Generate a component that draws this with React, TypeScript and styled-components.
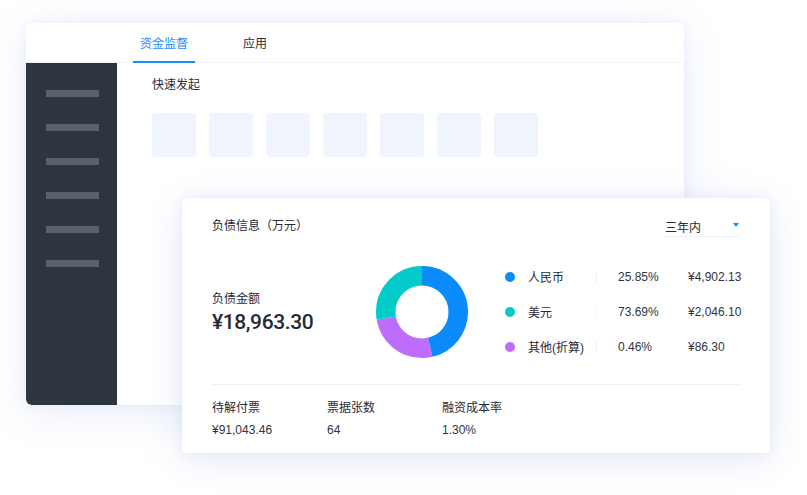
import React from 'react'
import styled, { createGlobalStyle } from 'styled-components'

const GlobalStyle = createGlobalStyle`
  html, body {
    margin: 0;
    padding: 0;
    background: #ffffff;
  }
  body {
    font-family: 'Helvetica Neue', 'Liberation Sans', 'Noto Sans CJK SC', sans-serif;
    color: #262a36;
    -webkit-font-smoothing: antialiased;
  }
`

const sideItems = [0, 1, 2, 3, 4, 5]
const quickItems = [0, 1, 2, 3, 4, 5, 6]

const legend = [
  { color: '#0b8bfa', name: '人民币', pct: '25.85%', amount: '¥4,902.13' },
  { color: '#03cbc9', name: '美元', pct: '73.69%', amount: '¥2,046.10' },
  { color: '#bd6cfb', name: '其他(折算)', pct: '0.46%', amount: '¥86.30' },
]

const stats = [
  { label: '待解付票', value: '¥91,043.46' },
  { label: '票据张数', value: '64' },
  { label: '融资成本率', value: '1.30%' },
]

// segments of the donut, in fractions of the full circle, clockwise from 12 o'clock
const segments = [
  { color: '#0b8bfa', from: 0, to: 0.463 },
  { color: '#bd6cfb', from: 0.463, to: 0.722 },
  { color: '#03cbc9', from: 0.722, to: 1 },
]

const Donut: React.FC = () => {
  const r = 36.25
  const c = 2 * Math.PI * r
  return (
    <DonutSvg width={92} height={92} viewBox="0 0 92 92">
      <g transform="rotate(-90 46 46)">
        {segments.map((s) => (
          <circle
            key={s.color}
            cx={46}
            cy={46}
            r={r}
            fill="none"
            stroke={s.color}
            strokeWidth={19.5}
            strokeDasharray={`${(s.to - s.from) * c} ${c}`}
            strokeDashoffset={-s.from * c}
          />
        ))}
      </g>
    </DonutSvg>
  )
}

export default function App() {
  return (
    <>
      <GlobalStyle />
      <Page>
        <BackCard>
          <Header>
            <HeaderSpacer />
            <Tabs>
              <Tab active>资金监督</Tab>
              <Tab>应用</Tab>
            </Tabs>
          </Header>
          <Body>
            <Sidebar>
              {sideItems.map((i) => (
                <SideBar key={i} />
              ))}
            </Sidebar>
            <Content>
              <SectionTitle>快速发起</SectionTitle>
              <QuickRow>
                {quickItems.map((i) => (
                  <QuickTile key={i} />
                ))}
              </QuickRow>
            </Content>
          </Body>
        </BackCard>

        <FrontCard>
          <CardHead>
            <CardTitle>负债信息（万元）</CardTitle>
            <Select>
              <span>三年内</span>
              <Caret />
            </Select>
          </CardHead>
          <Overview>
            <Total>
              <TotalLabel>负债金额</TotalLabel>
              <TotalValue>¥18,963.30</TotalValue>
            </Total>
            <Donut />
            <Legend>
              {legend.map((l) => (
                <LegendRow key={l.name}>
                  <Dot color={l.color} />
                  <LegendName>{l.name}</LegendName>
                  <LegendSep />
                  <LegendPct>{l.pct}</LegendPct>
                  <LegendAmount>{l.amount}</LegendAmount>
                </LegendRow>
              ))}
            </Legend>
          </Overview>
          <Stats>
            {stats.map((s) => (
              <Stat key={s.label}>
                <StatLabel>{s.label}</StatLabel>
                <StatValue>{s.value}</StatValue>
              </Stat>
            ))}
          </Stats>
        </FrontCard>
      </Page>
    </>
  )
}

const Page = styled.div`
  position: relative;
  width: 807px;
  height: 495px;
  padding: 23px 0 0 26px;
  box-sizing: border-box;
  overflow: hidden;
`

const BackCard = styled.div`
  width: 658px;
  height: 382px;
  background: #ffffff;
  border-radius: 6px;
  overflow: hidden;
  display: flex;
  flex-direction: column;
  box-shadow: 0 8px 40px rgba(190, 202, 240, 0.35), 0 0 12px rgba(210, 218, 245, 0.3);
`

const Header = styled.div`
  height: 40px;
  display: flex;
  flex-shrink: 0;
  border-bottom: 1px solid #f0f3fb;
  box-sizing: border-box;
`

const HeaderSpacer = styled.div`
  width: 91px;
`

const Tabs = styled.div`
  display: flex;
  gap: 41px;
  padding-left: 16px;
`

const Tab = styled.div<{ active?: boolean }>`
  height: 40px;
  padding: 0 7px;
  display: flex;
  align-items: center;
  box-sizing: border-box;
  font-size: 12px;
  color: ${(p) => (p.active ? '#1a8cff' : '#262a36')};
  border-bottom: 2px solid ${(p) => (p.active ? '#1a8cff' : 'transparent')};
  margin-bottom: -1px;
`

const Body = styled.div`
  flex: 1;
  display: flex;
`

const Sidebar = styled.div`
  width: 91px;
  background: #2c3540;
  padding-top: 27px;
  display: flex;
  flex-direction: column;
  gap: 27px;
  box-sizing: border-box;
`

const SideBar = styled.div`
  width: 53px;
  height: 7px;
  margin-left: 20px;
  background: #59626a;
`

const Content = styled.div`
  flex: 1;
  padding: 14px 0 0 35px;
`

const SectionTitle = styled.div`
  font-size: 12px;
  line-height: 16px;
  color: #262a36;
`

const QuickRow = styled.div`
  display: flex;
  gap: 13px;
  margin-top: 20px;
`

const QuickTile = styled.div`
  width: 44px;
  height: 44px;
  border-radius: 4px;
  background: #f0f5fd;
`

const FrontCard = styled.div`
  position: absolute;
  left: 182px;
  top: 198px;
  width: 588px;
  height: 255px;
  background: #ffffff;
  border-radius: 6px;
  box-sizing: border-box;
  padding: 18px 29px 0 30px;
  display: flex;
  flex-direction: column;
  box-shadow: 0 6px 36px rgba(185, 198, 238, 0.4), 0 0 10px rgba(210, 218, 245, 0.3);
`

const CardHead = styled.div`
  display: flex;
  justify-content: space-between;
  align-items: flex-start;
  height: 20px;
`

const CardTitle = styled.div`
  font-size: 12px;
  line-height: 20px;
`

const Select = styled.div`
  width: 76px;
  height: 20px;
  box-sizing: content-box;
  padding-left: 1px;
  border-bottom: 1px solid #eef2fa;
  display: flex;
  justify-content: space-between;
  align-items: center;
  font-size: 12px;
`

const Caret = styled.span`
  width: 0;
  height: 0;
  margin-right: 2px;
  margin-bottom: 2px;
  border-left: 3px solid transparent;
  border-right: 3px solid transparent;
  border-top: 4px solid #1a8cff;
`

const Overview = styled.div`
  height: 149px;
  display: flex;
  align-items: center;
  border-bottom: 1px solid #eef2fa;
  box-sizing: border-box;
  padding-top: 4px;
`

const Total = styled.div`
  width: 164px;
  flex-shrink: 0;
  display: flex;
  flex-direction: column;
  margin-top: 2px;
`

const TotalLabel = styled.div`
  font-size: 12px;
  line-height: 16px;
`

const TotalValue = styled.div`
  font-family: Roboto, 'Liberation Sans', sans-serif;
  font-size: 21px;
  line-height: 28px;
  font-weight: 500;
  letter-spacing: -0.4px;
  margin-top: 1px;
`

const DonutSvg = styled.svg`
  display: block;
  flex-shrink: 0;
`

const Legend = styled.div`
  margin-left: 37px;
  display: flex;
  flex-direction: column;
  gap: 19px;
  margin-top: -1px;
`

const LegendRow = styled.div`
  display: flex;
  align-items: center;
  height: 16px;
  font-size: 12px;
`

const Dot = styled.span<{ color: string }>`
  width: 10px;
  height: 10px;
  border-radius: 50%;
  background: ${(p) => p.color};
  margin-right: 13px;
`

const LegendName = styled.span`
  width: 68px;
`

const LegendSep = styled.span`
  width: 1px;
  height: 12px;
  background: #eef1f7;
  margin-right: 21px;
`

const LegendPct = styled.span`
  width: 70px;
  color: #2f3440;
`

const LegendAmount = styled.span`
  color: #2f3440;
`

const Stats = styled.div`
  display: flex;
  padding-top: 15px;
`

const Stat = styled.div`
  width: 115px;
  display: flex;
  flex-direction: column;
  gap: 6px;
  font-size: 12px;
  line-height: 16px;
`

const StatLabel = styled.div``

const StatValue = styled.div`
  color: #2f3440;
`
